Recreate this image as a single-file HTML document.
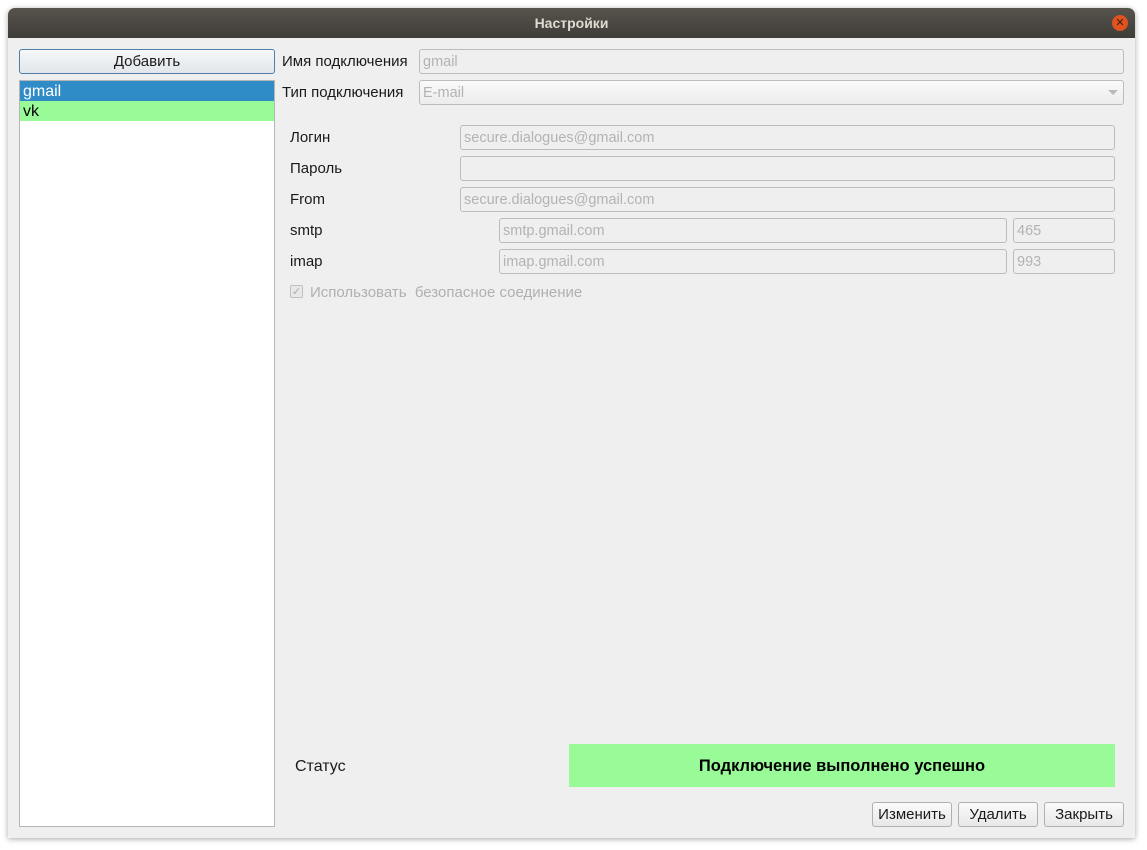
<!DOCTYPE html>
<html><head><meta charset="utf-8"><style>
body{margin:0;width:1147px;height:850px;background:#fff;font-family:"Liberation Sans","DejaVu Sans",sans-serif;font-size:15px;position:relative;overflow:hidden}
.a{position:absolute;box-sizing:border-box}
.win{left:8px;top:8px;width:1127px;height:830px;background:#efefef;border-radius:7px 7px 0 0;box-shadow:0 1px 6px rgba(0,0,0,.35)}
.tb{left:8px;top:8px;width:1127px;height:30px;background:linear-gradient(#57534c,#3f3d38);border-radius:7px 7px 0 0;color:#dfdbd2;font-weight:bold;text-align:center;line-height:30px;font-size:14px}
.in{border:1px solid #bcbcbc;border-radius:3px;background:#efefef;color:#b3b3b3;padding-left:3px;line-height:24px;font-size:14.5px}
.lb{color:#1a1a1a;font-size:15px}
.btn{border:1px solid #b0b0b0;border-radius:3px;background:linear-gradient(#fafafa,#e8e8e8);text-align:center;line-height:24px;color:#1a1a1a;font-size:15px}
</style></head><body>
<div class="a win"></div>
<div class="a tb">Настройки</div>
<div class="a" style="left:1112px;top:15px;width:16px;height:16px;border-radius:50%;background:#e0531f;color:#3a1a0a;font-size:11px;line-height:16px;text-align:center">✕</div>
<div class="a btn" style="left:19px;top:49px;width:256px;height:25px;border-color:#4f7fa8;background:linear-gradient(#f6f8fa,#e2e6ea)">Добавить</div>
<div class="a" style="left:19px;top:80px;width:256px;height:747px;background:#fff;border:1px solid #b6b6b6"></div>
<div class="a" style="left:20px;top:81px;width:254px;height:20px;background:#308cc6;color:#fff;font-size:16px;line-height:21px;padding-left:3px">gmail</div>
<div class="a" style="left:20px;top:101px;width:254px;height:20px;background:#98fb98;color:#000;font-size:16px;line-height:21px;padding-left:3px">vk</div>
<div class="a lb" style="left:282px;top:53px">Имя подключения</div>
<div class="a in" style="left:419px;top:49px;width:705px;height:25px">gmail</div>
<div class="a lb" style="left:282px;top:84px">Тип подключения</div>
<div class="a in" style="left:419px;top:80px;width:705px;height:25px;background:linear-gradient(#fafafa,#ececec)">E-mail</div>
<div class="a" style="left:1108px;top:90px;width:0;height:0;border-left:5px solid transparent;border-right:5px solid transparent;border-top:5px solid #bbb"></div>
<div class="a lb" style="left:290px;top:129px">Логин</div>
<div class="a in" style="left:460px;top:125px;width:655px;height:25px">secure.dialogues@gmail.com</div>
<div class="a lb" style="left:290px;top:160px">Пароль</div>
<div class="a in" style="left:460px;top:156px;width:655px;height:25px"></div>
<div class="a lb" style="left:290px;top:191px">From</div>
<div class="a in" style="left:460px;top:187px;width:655px;height:25px">secure.dialogues@gmail.com</div>
<div class="a lb" style="left:290px;top:222px">smtp</div>
<div class="a in" style="left:499px;top:218px;width:508px;height:25px">smtp.gmail.com</div>
<div class="a in" style="left:1013px;top:218px;width:102px;height:25px">465</div>
<div class="a lb" style="left:290px;top:253px">imap</div>
<div class="a in" style="left:499px;top:249px;width:508px;height:25px">imap.gmail.com</div>
<div class="a in" style="left:1013px;top:249px;width:102px;height:25px">993</div>
<div class="a" style="left:290px;top:285px;width:13px;height:13px;border:1px solid #c0c0c0;border-radius:2px;background:#e8e8e8;color:#aaa;font-size:11px;line-height:12px;text-align:center">✓</div>
<div class="a" style="left:310px;top:284px;color:#b0b0b0;font-size:15px">Использовать&nbsp; безопасное соединение</div>
<div class="a lb" style="left:295px;top:758px;font-size:16px">Статус</div>
<div class="a" style="left:569px;top:744px;width:546px;height:43px;background:#98fb98;text-align:center;line-height:45px;font-weight:bold;font-size:16.5px;color:#000">Подключение выполнено успешно</div>
<div class="a btn" style="left:872px;top:802px;width:80px;height:25px">Изменить</div>
<div class="a btn" style="left:958px;top:802px;width:80px;height:25px">Удалить</div>
<div class="a btn" style="left:1044px;top:802px;width:80px;height:25px">Закрыть</div>
</body></html>
